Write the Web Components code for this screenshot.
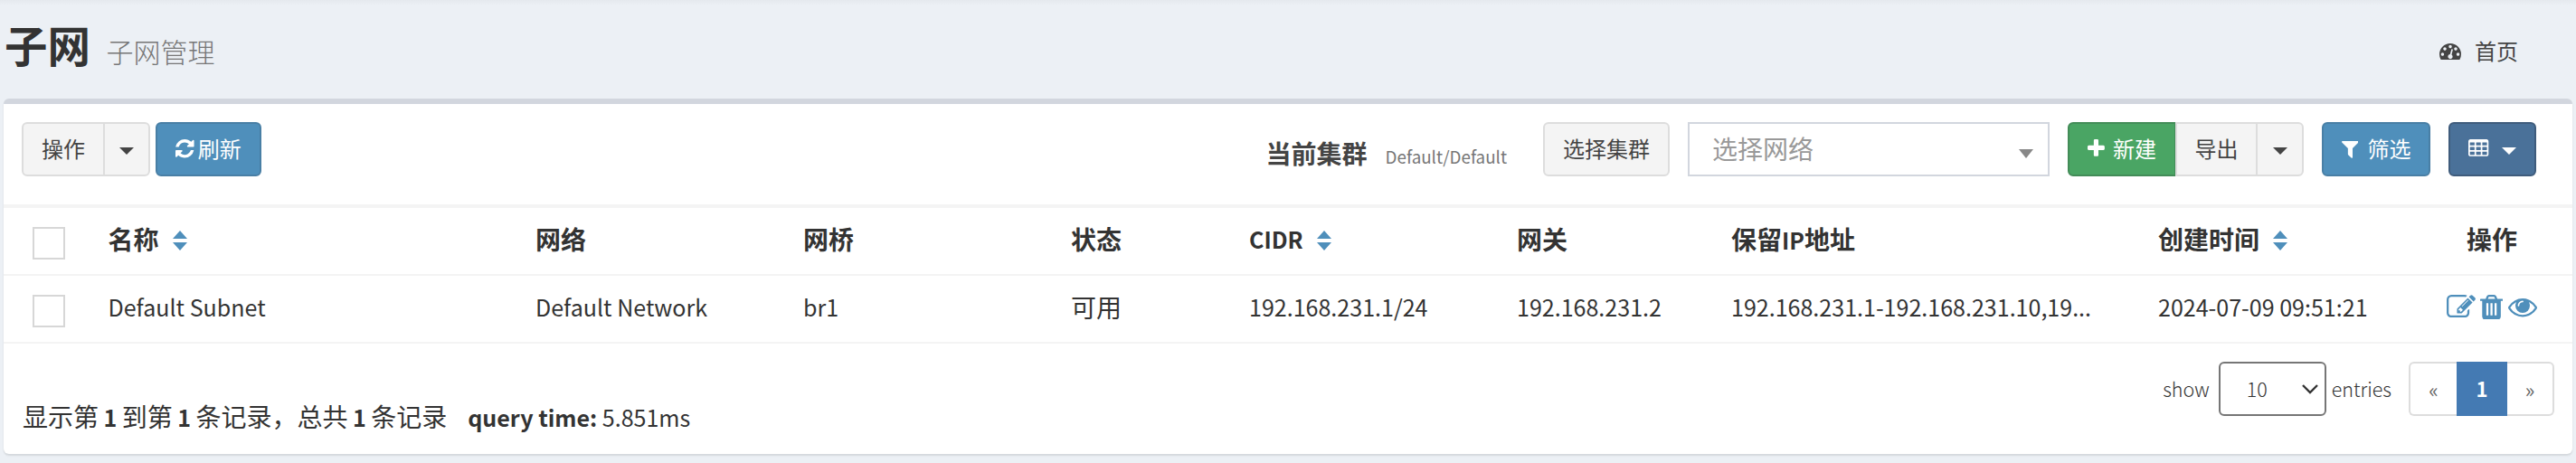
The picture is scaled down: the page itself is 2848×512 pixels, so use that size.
<!DOCTYPE html>
<html lang="zh-CN">
<head>
<meta charset="utf-8">
<title>子网</title>
<style>
html,body{margin:0;padding:0}
body{width:2848px;height:512px;overflow:hidden;background:#ecf0f5;color:#333;font-family:"Noto Sans CJK SC",sans-serif;font-size:28px}
</style>
</head>
<body>
<subnet-page></subnet-page>
<script>
const define=(name,html,setup)=>{
  const t=document.createElement('template');
  t.innerHTML=html;
  customElements.define(name,class extends HTMLElement{
    constructor(){super();this.attachShadow({mode:'open'});}
    connectedCallback(){
      if(this.shadowRoot.childNodes.length)return;
      this.shadowRoot.append(t.content.cloneNode(true));
      if(setup)setup(this,this.shadowRoot);
    }
  });
};

/* each icon: [viewBox, width, height, path], 1792 units to the em */
const ICONS={
  refresh:['128 128 1536 1536',1536,1536,'M1639 1056q0 5-1 7-64 268-268 434.5t-478 166.5q-146 0-282.5-55t-243.5-157l-129 129q-19 19-45 19t-45-19-19-45v-448q0-26 19-45t45-19h448q26 0 45 19t19 45-19 45l-137 137q71 66 161 102t187 36q134 0 250-65t186-179q11-17 53-117 8-23 30-23h192q13 0 22.5 9.5t9.5 22.5zm25-800v448q0 26-19 45t-45 19h-448q-26 0-45-19t-19-45 19-45l138-138q-148-137-349-137-134 0-250 65t-186 179q-11 17-53 117-8 23-30 23h-199q-13 0-22.5-9.5t-9.5-22.5v-7q65-268 270-434.5t480-166.5q146 0 284 55.5t245 156.5l130-129q19-19 45-19t45 19 19 45z'],
  plus:['192 128 1408 1408',1408,1408,'M1600 736v192q0 40-28 68t-68 28h-416v416q0 40-28 68t-68 28h-192q-40 0-68-28t-28-68v-416h-416q-40 0-68-28t-28-68v-192q0-40 28-68t68-28h416v-416q0-40 28-68t68-28h192q40 0 68 28t28 68v416h416q40 0 68 28t28 68z'],
  filter:['192 256 1408 1408',1408,1408,'M1595 295q17 41-14 70l-493 493v742q0 42-39 59-13 5-25 5-27 0-45-19l-256-256q-19-19-19-45v-486l-493-493q-31-29-14-70 17-39 59-39h1280q42 0 59 39z'],
  table:['64 128 1664 1408',1664,1408,'M576 1376v-192q0-14-9-23t-23-9h-320q-14 0-23 9t-9 23v192q0 14 9 23t23 9h320q14 0 23-9t9-23zm0-384v-192q0-14-9-23t-23-9h-320q-14 0-23 9t-9 23v192q0 14 9 23t23 9h320q14 0 23-9t9-23zm512 384v-192q0-14-9-23t-23-9h-320q-14 0-23 9t-9 23v192q0 14 9 23t23 9h320q14 0 23-9t9-23zm-512-768v-192q0-14-9-23t-23-9h-320q-14 0-23 9t-9 23v192q0 14 9 23t23 9h320q14 0 23-9t9-23zm512 384v-192q0-14-9-23t-23-9h-320q-14 0-23 9t-9 23v192q0 14 9 23t23 9h320q14 0 23-9t9-23zm512 384v-192q0-14-9-23t-23-9h-320q-14 0-23 9t-9 23v192q0 14 9 23t23 9h320q14 0 23-9t9-23zm-512-768v-192q0-14-9-23t-23-9h-320q-14 0-23 9t-9 23v192q0 14 9 23t23 9h320q14 0 23-9t9-23zm512 384v-192q0-14-9-23t-23-9h-320q-14 0-23 9t-9 23v192q0 14 9 23t23 9h320q14 0 23-9t9-23zm0-384v-192q0-14-9-23t-23-9h-320q-14 0-23 9t-9 23v192q0 14 9 23t23 9h320q14 0 23-9t9-23zm128-320v1088q0 66-47 113t-113 47h-1344q-66 0-113-47t-47-113v-1088q0-66 47-113t113-47h1344q66 0 113 47t47 113z'],
  dashboard:['0 256 1792 1408',1792,1408,'M384 1152q0-53-37.5-90.5t-90.5-37.5-90.5 37.5-37.5 90.5 37.5 90.5 90.5 37.5 90.5-37.5 37.5-90.5zm192-448q0-53-37.5-90.5t-90.5-37.5-90.5 37.5-37.5 90.5 37.5 90.5 90.5 37.5 90.5-37.5 37.5-90.5zm428 481l101-382q6-26-7.5-48.5t-38.5-29.5-48 6.5-30 39.5l-101 382q-60 5-107 43.5t-63 98.5q-20 77 20 146t117 89 146-20 89-117q16-60-6-117t-72-91zm660-33q0-53-37.5-90.5t-90.5-37.5-90.5 37.5-37.5 90.5 37.5 90.5 90.5 37.5 90.5-37.5 37.5-90.5zm-640-640q0-53-37.5-90.5t-90.5-37.5-90.5 37.5-37.5 90.5 37.5 90.5 90.5 37.5 90.5-37.5 37.5-90.5zm448 192q0-53-37.5-90.5t-90.5-37.5-90.5 37.5-37.5 90.5 37.5 90.5 90.5 37.5 90.5-37.5 37.5-90.5zm320 448q0 261-141 483-19 29-54 29h-1402q-35 0-54-29-141-221-141-483 0-182 71-348t191-286 286-191 348-71 348 71 286 191 191 286 71 348z'],
  edit:['0 128 1792 1408',1792,1408,'M888 1184l116-116-152-152-116 116v56h96v96h56zm440-720q-16-16-33 1l-350 350q-17 17-1 33t33-1l350-350q17-17 1-33zm80 594v190q0 119-84.5 203.5t-203.5 84.5h-832q-119 0-203.5-84.5t-84.5-203.5v-832q0-119 84.5-203.5t203.5-84.5h832q63 0 117 25 15 7 18 23 3 17-9 29l-49 49q-14 14-32 8-23-6-45-6h-832q-66 0-113 47t-47 113v832q0 66 47 113t113 47h832q66 0 113-47t47-113v-126q0-13 9-22l64-64q15-15 35-7t20 29zm-96-738l288 288-672 672h-288v-288zm444 132l-92 92-288-288 92-92q28-28 68-28t68 28l152 152q28 28 28 68t-28 68z'],
  trash:['192 128 1408 1536',1408,1536,'M704 1376v-704q0-14-9-23t-23-9h-64q-14 0-23 9t-9 23v704q0 14 9 23t23 9h64q14 0 23-9t9-23zm256 0v-704q0-14-9-23t-23-9h-64q-14 0-23 9t-9 23v704q0 14 9 23t23 9h64q14 0 23-9t9-23zm256 0v-704q0-14-9-23t-23-9h-64q-14 0-23 9t-9 23v704q0 14 9 23t23 9h64q14 0 23-9t9-23zm-544-992h448l-48-117q-7-9-17-11h-317q-10 2-17 11zm928 32v64q0 14-9 23t-23 9h-96v948q0 83-47 143.5t-113 60.5h-832q-66 0-113-58.5t-47-141.5v-952h-96q-14 0-23-9t-9-23v-64q0-14 9-23t23-9h309l70-167q15-37 54-63t79-26h320q40 0 79 26t54 63l70 167h309q14 0 23 9t9 23z'],
  eye:['0 384 1792 1152',1792,1152,'M1664 960q-152-236-381-353 61 104 61 225 0 185-131.5 316.5t-316.5 131.5-316.5-131.5-131.5-316.5q0-121 61-225-229 117-381 353 133 205 333.5 326.5t434.5 121.5 434.5-121.5 333.5-326.5zm-720-384q0-20-14-34t-34-14q-125 0-214.5 89.5t-89.5 214.5q0 20 14 34t34 14 34-14 14-34q0-86 61-147t147-61q20 0 34-14t14-34zm848 384q0 34-20 69-140 230-376.5 368.5t-499.5 138.5-499.5-139-376.5-368q-20-35-20-69t20-69q140-229 376.5-368t499.5-139 499.5 139 376.5 368q20 35 20 69z']
};
define('fa-icon',`<style>:host{display:block;flex:none;font-size:24px;line-height:0}svg{display:block;fill:currentColor}</style><svg aria-hidden="true"><path/></svg>`,(el,root)=>{
  const [box,w,h,d]=ICONS[el.getAttribute('name')],svg=root.querySelector('svg');
  svg.setAttribute('viewBox',box);
  svg.style.width=w/1792+'em';svg.style.height=h/1792+'em';
  root.querySelector('path').setAttribute('d',d);
});

define('caret-down',`<style>:host{display:block;flex:none;width:0;height:0;border:8px solid transparent;border-top-color:currentColor;border-bottom:0}</style>`);

/* Latin runs are set smaller than the Chinese text around them */
define('latin-text',`<style>:host{display:inline;font-size:.895em}</style><slot></slot>`);

define('ui-button',`<style>
:host{display:flex;box-sizing:border-box;flex:none;height:60px;align-items:center;justify-content:center;border:2px solid #ddd;border-radius:6px;background:#f4f4f4;color:#444;font-size:24px;line-height:34px;white-space:nowrap;padding-bottom:3px}
:host([kind=primary]){background:#4f8fbb;border-color:#497fa5;color:#fff}
:host([kind=success]){background:#4aa564;border-color:#438c58;color:#fff}
:host([kind=dark]){background:#4a7199;border-color:#3f5c7c;color:#fff}
:host([side=left]){border-radius:6px 0 0 6px}
:host([side=mid]){border-radius:0}
:host([side=right]){border-radius:0 6px 6px 0;margin-left:-2px}
</style><slot></slot>`);

define('page-header',`<style>
:host{display:flex;box-sizing:border-box;height:109px;padding:0 64px 0 5px;align-items:flex-start;background:linear-gradient(#e5e9ee,#ecf0f5 6px)}
h1{margin:15px 0 0;font-size:47.5px;font-weight:700;line-height:68px;flex:none}
small{margin:31px 0 0 17.5px;font-size:30px;font-weight:300;line-height:50px;color:#777;flex:1}
nav{display:flex;margin-top:38px;font-size:24px;line-height:36px;color:#444}
fa-icon{margin:9.5px 15px 0 0}
</style><h1>子网</h1><small>子网管理</small><nav><fa-icon name="dashboard"></fa-icon><span>首页</span></nav>`);

define('select-box',`<style>
:host{display:flex;box-sizing:border-box;width:400px;height:60px;border:2px solid #d2d6de;padding:0 16px 0 25px;justify-content:space-between;font-size:28px;line-height:54px;color:#999}
i{margin-top:28px;width:0;height:0;border:8px solid transparent;border-top:10px solid #888;border-bottom:0}
</style><slot></slot><i></i>`);

define('tool-bar',`<style>
:host{display:flex;box-sizing:border-box;height:111px;padding:20px 40px 0 20px}
div{display:flex}
.right{margin-left:auto;gap:20px;align-items:flex-start}
b{font-size:28px;line-height:40px;color:#444;margin:14px 0 0}
small{font-size:23.5px;line-height:34px;color:#777;margin:19px 20px 0 0}
small latin-text{font-size:21px;letter-spacing:-.7px}
small latin-text{letter-spacing:0;font-size:18.8px}
</style>
<div><ui-button side="left" style="width:92px">操作</ui-button><ui-button side="right" style="width:52px"><caret-down style="margin-top:7px"></caret-down></ui-button><ui-button kind="primary" style="width:117px;margin-left:6px"><fa-icon name="refresh" style="margin:2px 4px 0 0"></fa-icon>刷新</ui-button></div>
<div class="right"><b>当前集群</b><small><latin-text>Default/Default</latin-text></small>
<ui-button style="width:140px">选择集群</ui-button>
<select-box>选择网络</select-box>
<div><ui-button kind="success" side="left" style="width:120px"><fa-icon name="plus" style="margin-right:9px"></fa-icon>新建</ui-button><ui-button side="mid" style="width:91px;margin-left:-1px">导出</ui-button><ui-button side="right" style="width:53px"><caret-down style="margin-top:7px"></caret-down></ui-button></div>
<ui-button kind="primary" style="width:120px"><fa-icon name="filter" style="margin:4px 10px 0 0"></fa-icon>筛选</ui-button>
<ui-button kind="dark" style="width:97px"><fa-icon name="table" style="margin-right:14px"></fa-icon><caret-down style="margin-top:7px"></caret-down></ui-button></div>`);

define('check-box',`<style>:host{display:block;box-sizing:border-box;width:36px;height:36px;border:2px solid #d7d7d7;background:#fff;margin:7px 0 0 32px}</style>`);
define('sort-mark',`<style>:host{display:block;margin:11px 0 0 15px}svg{display:block;fill:#4f8fbb}</style><svg width="16" height="22"><path d="M8 0l8 9H0zM8 22l8-9H0z"/></svg>`);

define('table-row',`<style>
:host{display:grid;box-sizing:border-box;grid-template-columns:115.5px 472.5px 296px 296px 197px 296px 237px 472px 314px 1fr;height:75px;padding-top:14px;border-bottom:2px solid #f4f4f4;line-height:41px;white-space:nowrap}
:host([head]){font-weight:700}
::slotted(*){display:flex}
</style><slot></slot>`);
define('row-actions',`<style>:host{display:flex;color:#4f8fbb;padding-left:5px}fa-icon{font-size:32px}</style>
<fa-icon name="edit" style="margin-top:7px"></fa-icon><fa-icon name="trash" style="margin:7px 6px 0 5px"></fa-icon><fa-icon name="eye" style="margin-top:11px"></fa-icon>`);

define('subnet-table',`<style>:host{display:block;border-top:4px solid #f4f4f4}.op{padding-left:27px}</style>
<table-row head><check-box></check-box><div>名称<sort-mark></sort-mark></div><div>网络</div><div>网桥</div><div>状态</div><div><latin-text>CIDR</latin-text><sort-mark></sort-mark></div><div>网关</div><div><span>保留<latin-text>IP</latin-text>地址</span></div><div>创建时间<sort-mark></sort-mark></div><div class="op">操作</div></table-row>
<table-row><check-box></check-box><div><latin-text>Default Subnet</latin-text></div><div><latin-text>Default Network</latin-text></div><div><latin-text>br1</latin-text></div><div>可用</div><div><latin-text>192.168.231.1/24</latin-text></div><div><latin-text>192.168.231.2</latin-text></div><div><latin-text>192.168.231.1-192.168.231.10,19...</latin-text></div><div><latin-text>2024-07-09 09:51:21</latin-text></div><row-actions></row-actions></table-row>`);

define('page-list',`<style>
:host{display:flex;box-sizing:border-box;width:161px;height:60px;font-size:22px;line-height:57px;text-align:center;color:#666}
span{box-sizing:border-box;width:53px;border:2px solid #ddd;border-right:0;border-radius:6px 0 0 6px}
span:last-child{width:52px;border:2px solid #ddd;border-left:0;border-radius:0 6px 6px 0}
b{width:56px;background:#447ab3;color:#fff;line-height:59px}
</style><span>«</span><b>1</b><span>»</span>`);

define('table-footer',`<style>
:host{display:flex;height:122px;padding:0 20px 0 21px;box-sizing:border-box;justify-content:space-between}
p{margin:60px 0 0;line-height:40px;white-space:nowrap;word-spacing:-.8px}
.q{margin-left:23px;word-spacing:0}
.pager{display:flex;margin-top:20px;font-size:24px;font-weight:300;line-height:59px}
.num{display:flex;box-sizing:border-box;width:119px;height:60px;border:2px solid #767676;border-radius:6px;margin:0 6px 0 10px;padding:0 7px 0 29px;justify-content:space-between;line-height:55px}
svg{margin-top:22px}
page-list{margin-left:19px;font-weight:400}
</style><p>显示第 <latin-text><b>1</b></latin-text> 到第 <latin-text><b>1</b></latin-text> 条记录，总共 <latin-text><b>1</b></latin-text> 条记录<latin-text class="q"><b>query time:</b> 5.851ms</latin-text></p>
<div class="pager"><latin-text>show</latin-text><div class="num"><latin-text>10</latin-text><svg width="18" height="12" fill="none" stroke="#333" stroke-width="2.4"><path d="M1 2l8 8 8-8"/></svg></div><latin-text>entries</latin-text><page-list></page-list></div>`);

define('panel-box',`<style>:host{display:block;box-sizing:border-box;height:393px;margin:0 4px;background:#fff;border-top:6px solid #d2d6de;border-radius:6px;box-shadow:0 2px 2px rgba(0,0,0,.1)}</style><slot></slot>`);

define('subnet-page',`<style>:host{display:block}</style><page-header></page-header><panel-box><tool-bar></tool-bar><subnet-table></subnet-table><table-footer></table-footer></panel-box>`);
</script>
</body>
</html>
